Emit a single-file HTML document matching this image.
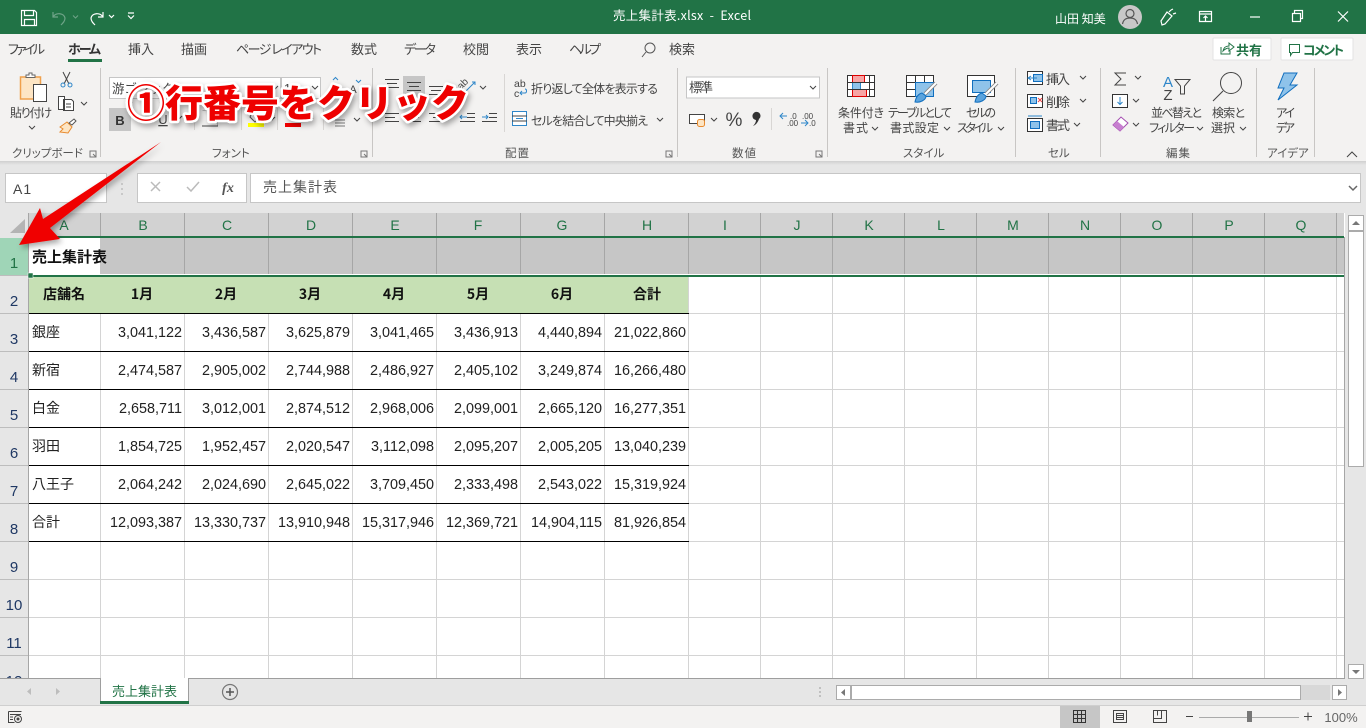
<!DOCTYPE html>
<html lang="ja"><head><meta charset="utf-8"><title>売上集計表.xlsx - Excel</title>
<style>
html,body{margin:0;padding:0;width:1366px;height:728px;overflow:hidden;background:#fff}
svg{display:block;position:absolute;left:0;top:0}
text{font-family:"Liberation Sans","Noto Sans CJK JP",sans-serif;fill:#444}
.j{font-family:"Noto Sans CJK JP","Liberation Sans",sans-serif}
.t{font-size:12px;fill:#444;font-family:"Noto Sans CJK JP",sans-serif;text-anchor:middle;font-feature-settings:"palt"}
.a{font-size:13px;fill:#444;font-family:"Noto Sans CJK JP",sans-serif;font-feature-settings:"palt"}
.s{font-size:11.500px;fill:#555;font-family:"Noto Sans CJK JP",sans-serif;font-feature-settings:"palt"}
.w{fill:#fff;font-family:"Noto Sans CJK JP",sans-serif;font-size:12.500px;white-space:pre}
.n{font-size:14.400px;fill:#222;text-anchor:end;font-family:"Liberation Sans",sans-serif}
.c{font-size:14px;fill:#222;font-family:"Noto Sans CJK JP",sans-serif}
.b{font-size:14px;fill:#111;font-weight:700;font-family:"Noto Sans CJK JP",sans-serif;text-anchor:middle}
.h{font-size:14px;fill:#217346;text-anchor:middle;font-family:"Liberation Sans",sans-serif}
.r{font-size:15px;fill:#1f3864;text-anchor:middle;font-family:"Liberation Sans",sans-serif}
.l{stroke:#444;stroke-width:1;fill:none}
.lw{stroke:#fff;stroke-width:1.2;fill:none}
.g{stroke:#d4d4d4;stroke-width:1}
.k{stroke:#000;stroke-width:1}
</style></head><body>
<svg width="1366" height="728" viewBox="0 0 1366 728">
<defs>
<filter id="sh" x="-10%" y="-40%" width="120%" height="200%"><feDropShadow dx="2" dy="3" stdDeviation="3" flood-color="#000" flood-opacity=".35"/></filter>
<linearGradient id="rs" x1="0" y1="0" x2="0" y2="1"><stop offset="0" stop-color="#cfcfcf"/><stop offset="1" stop-color="#e6e6e6"/></linearGradient>
<path id="ch" d="M0 0l3 3 3-3" fill="none" stroke="#444" stroke-width="1"/>
</defs>
<!-- title bar -->
<rect width="1366" height="34" fill="#217346"/>
<path d="M21.500 10.500h13l2 2v13h-15zM24.500 10.500v5h9v-5M24.500 25.500v-6h10v6" class="lw"/>
<path d="M53 12v5h5M53 17c3-5 11-4 12 1 0 3-2 5-4 7" stroke="#6fa388" stroke-width="1.200" fill="none"/>
<path d="M73 15.500l2.500 2.500 2.500-2.500" stroke="#6fa388" fill="none"/>
<path d="M103 12v5h-5M103 17c-3-5-11-4-12 1 0 3 2 5 4 7" class="lw"/>
<path d="M109 15l2.500 2.500 2.500-2.500" class="lw"/>
<path d="M128 13h6M128 15.500l3 3 3-3" class="lw"/>
<text x="613" y="20" class="w" textLength="138" lengthAdjust="spacing" xml:space="preserve">売上集計表.xlsx  -  Excel</text>
<text x="1055" y="23" class="w" style="font-size:12px">山田 知美</text>
<circle cx="1130" cy="17" r="12" fill="#c8c8c8"/>
<circle cx="1130" cy="13.500" r="4" fill="none" stroke="#555" stroke-width="1.200"/>
<path d="M1122.500 24c1-5 4-6 7.500-6s6.500 1 7.500 6" fill="none" stroke="#555" stroke-width="1.200"/>
<path d="M1161 21l6-9 5 4-7 8-3 1zM1169 12l2-2M1173 14l3-1M1171 10l2-1" class="lw"/>
<path d="M1199.500 11.500h12v10h-12zM1199.500 14h12M1205.500 21v-5M1203.500 18l2-2 2 2" class="lw"/>
<path d="M1250 17h10" class="lw"/>
<path d="M1292.500 13.500h8v8h-8zM1294.500 13v-2.500h8v8h-2" class="lw"/>
<path d="M1338 11.500l10 10M1348 11.500l-10 10" class="lw"/>
<!-- ribbon -->
<rect y="34" width="1366" height="127" fill="#f3f2f1"/>
<rect y="161" width="1366" height="52" fill="#e6e6e6"/>
<rect y="161" width="1366" height="4" fill="url(#rs)"/>
<text x="8" y="54" class="a" textLength="37">ファイル</text>
<text x="68" y="54" class="a" textLength="33" style="font-weight:700;fill:#333">ホーム</text>
<text x="128" y="54" class="a" textLength="26">挿入</text>
<text x="181" y="54" class="a" textLength="26">描画</text>
<text x="236" y="54" class="a" textLength="86">ページ レイアウト</text>
<text x="351" y="54" class="a" textLength="26">数式</text>
<text x="404" y="54" class="a" textLength="32">データ</text>
<text x="463" y="54" class="a" textLength="26">校閲</text>
<text x="516" y="54" class="a" textLength="26">表示</text>
<text x="569" y="54" class="a" textLength="32">ヘルプ</text>
<text x="669" y="54" class="a" textLength="26">検索</text>
<rect x="68" y="59" width="34" height="3" fill="#217346"/>
<circle cx="650" cy="48" r="5" fill="none" stroke="#555" stroke-width="1"/><path d="M646 52l-4 5" stroke="#555"/>
<!-- share/comment -->
<rect x="1213" y="38" width="58" height="22" rx="1" fill="#fff" stroke="#e3e3e3"/>
<path d="M1221 47v7h9v-3M1223 51c1-4 3-5 6-5v-3l5 4-5 4v-3c-2 0-4 1-6 3z" fill="none" stroke="#217346"/>
<text x="1236" y="55" class="a" textLength="26" style="font-weight:700;fill:#217346">共有</text>
<rect x="1281" y="38" width="72" height="22" rx="1" fill="#fff" stroke="#e3e3e3"/>
<path d="M1289.500 44.500h10v8h-7l-2 3v-3h-1z" fill="none" stroke="#217346"/>
<text x="1303" y="55" class="a" textLength="41" style="font-weight:700;fill:#217346">コメント</text>
<!-- ribbon separators -->
<g stroke="#c8c6c4"><path d="M100.500 68v89M372.500 68v89M677.500 68v89M827.500 68v89M1015.500 68v89M1100.500 68v89M1256.500 68v89M1314.500 68v89"/></g>
<g stroke="#d8d6d4"><path d="M504.500 74v58"/></g>
<!-- group labels -->
<text x="12" y="157" class="s">クリップボード</text>
<text x="212" y="157" class="s">フォント</text>
<text x="505" y="157" class="s" textLength="24">配置</text>
<text x="732" y="157" class="s" textLength="24">数値</text>
<text x="903" y="157" class="s">スタイル</text>
<text x="1048" y="157" class="s">セル</text>
<text x="1166" y="157" class="s" textLength="24">編集</text>
<text x="1267" y="157" class="s">アイデア</text>
<g fill="none" stroke="#777"><path d="M90 151h6v6h-6zM93 154l3 3"/><path d="M361 151h6v6h-6zM364 154l3 3"/><path d="M666 151h6v6h-6zM669 154l3 3"/><path d="M816 151h6v6h-6zM819 154l3 3"/></g>
<path d="M1347 157l5-5 5 5" fill="none" stroke="#444"/>
<!-- clipboard -->
<rect x="20.500" y="77" width="20" height="22" fill="#fde5c4" stroke="#f0a04b" stroke-width="1.500"/>
<path d="M26 77v-2h3v-2h3v2h3v2.500h-9z" fill="#fff" stroke="#666"/>
<rect x="33.500" y="84.500" width="13" height="17" fill="#fff" stroke="#444"/>
<text x="10" y="117" class="t" style="text-anchor:start" textLength="42">貼り付け</text>
<use href="#ch" x="29" y="126"/>
<path d="M63 72l6 12M70 72l-6 12" stroke="#444" fill="none"/><circle cx="63" cy="85" r="2" fill="none" stroke="#2e86c9"/><circle cx="70" cy="85" r="2" fill="none" stroke="#2e86c9"/>
<path d="M58.500 96.500h6v13h-6zM63.500 99.500h8l2 2v9h-10z" fill="#fff" stroke="#444"/>
<path d="M66 104h5M66 107h5" stroke="#444"/>
<use href="#ch" x="81" y="102"/>
<path d="M60 127l7-5 5 5-4 6-8-1 3-3z" fill="#fde5c4" stroke="#e88b2f"/><path d="M69 123l5-4 2 2-4 4z" fill="#fff" stroke="#555"/>
<!-- font controls -->
<rect x="109.500" y="77.500" width="171" height="21" fill="#fff" stroke="#c6c6c6"/>
<rect x="281.500" y="77.500" width="39" height="21" fill="#fff" stroke="#c6c6c6"/>
<text x="112" y="93" class="j" style="font-size:12.500px;fill:#444">游ゴシック</text>
<text x="284" y="93" style="font-size:12.500px;fill:#444">11</text>
<use href="#ch" x="272" y="86"/><use href="#ch" x="312" y="86"/>
<text x="337" y="93" style="font-size:13px;fill:#444" text-anchor="middle">A</text><path d="M333 80l2.500-2.500 2.500 2.500" stroke="#2e86c9" fill="none"/>
<text x="353" y="93" style="font-size:11px;fill:#444" text-anchor="middle">A</text><path d="M356 80l2.500 2.500 2.500-2.500" stroke="#2e86c9" fill="none"/>
<rect x="109" y="108" width="22" height="23" fill="#c6c6c6"/>
<text x="120" y="125" style="font-size:13px;font-weight:700;fill:#333" text-anchor="middle">B</text>
<text x="163" y="124" style="font-size:13px;fill:#444" text-anchor="middle" text-decoration="underline">U</text>
<use href="#ch" x="176" y="116"/>
<path d="M194.500 108v22M277.500 108v22M241.500 108v22M323.500 108v22" stroke="#d8d6d4"/>
<path d="M202 126h16" stroke="#444"/><path d="M202.500 110.500h15v15" stroke="#bbb" fill="none"/>
<rect x="248" y="123" width="16" height="4" fill="#ffff00"/><path d="M252 113l6 6-3 3-5-5z" fill="none" stroke="#555"/>
<use href="#ch" x="269" y="117"/>
<rect x="285" y="123" width="16" height="4" fill="#f00000"/>
<use href="#ch" x="307" y="118"/>
<path d="M335 120h10M335 123h10M335 126h10" stroke="#777"/>
<use href="#ch" x="354" y="118"/>
<!-- alignment -->
<rect x="403" y="76" width="22" height="22" fill="#c6c6c6"/>
<g class="l"><path d="M385 79.500h14M387 83.500h10M385 87.500h14"/><path d="M407 82.500h14M409 86.500h10M407 90.500h14"/><path d="M429 86.500h14M431 90.500h10M429 94.500h14"/>
<path d="M385 113.500h14M385 117.500h10M385 121.500h14"/><path d="M407 113.500h14M409 117.500h10M407 121.500h14"/><path d="M429 113.500h14M433 117.500h10M429 121.500h14"/>
<path d="M467 113.500h8M467 117.500h8M460 121.500h15"/><path d="M489 113.500h8M489 117.500h8M482 121.500h15"/></g>
<path d="M467 117h-7M462 115l-2 2 2 2" stroke="#2e86c9" fill="none"/><path d="M482 117h6M486 115l2 2-2 2" stroke="#2e86c9" fill="none"/>
<text x="461" y="90" style="font-size:10px;fill:#444" transform="rotate(-45 461 90)">ab</text><path d="M466 91l9-9M472 82h3v3" stroke="#2e86c9" fill="none"/>
<use href="#ch" x="480" y="86"/>
<text x="514" y="87" style="font-size:10.500px;fill:#444">ab</text><text x="514" y="97" style="font-size:10.500px;fill:#444">c</text>
<path d="M520 93h5c2 0 2-4 0-4M522 91l-2 2 2 2" stroke="#2e86c9" fill="none"/>
<text x="531" y="93" class="t" style="text-anchor:start" textLength="127">折り返して全体を表示する</text>
<rect x="512.500" y="111.500" width="14" height="14" fill="#fff" stroke="#2e86c9"/><path d="M512 116h15M512 121h15" stroke="#444"/><path d="M516 118.500h7" stroke="#2e86c9"/>
<text x="531" y="125" class="t" style="text-anchor:start" textLength="117">セルを結合して中央揃え</text>
<use href="#ch" x="657" y="118"/>
<!-- number -->
<rect x="686.500" y="77" width="133" height="21" fill="#fff" stroke="#c6c6c6"/>
<text x="689" y="92" class="a" textLength="24">標準</text>
<use href="#ch" x="810" y="86"/>
<rect x="689.500" y="114.500" width="15" height="9" fill="#fff" stroke="#444"/><rect x="697.500" y="119.500" width="7" height="7" rx="2" fill="#fde5c4" stroke="#e88b2f"/>
<use href="#ch" x="711" y="118"/>
<text x="734" y="126" style="font-size:19px;fill:#444" text-anchor="middle">%</text>
<path d="M753 114a4 4 0 1 1 6 5c-1 3-3 6-6 7 2-2 3-4 3-6a4 4 0 0 1-3-6z" fill="#333"/>
<path d="M771.500 108v22" stroke="#d8d6d4"/>
<text x="790" y="119" style="font-size:8px;fill:#444">.0</text><text x="787" y="126" style="font-size:8px;fill:#444">.00</text><path d="M780 116h7M783 113l-3 3 3 3" stroke="#2e86c9" fill="none"/>
<text x="802" y="119" style="font-size:8px;fill:#444">.00</text><text x="809" y="126" style="font-size:8px;fill:#444">.0</text><path d="M801 123h7M805 120l3 3-3 3" stroke="#2e86c9" fill="none"/>
<!-- style icons -->
<rect x="847.500" y="75.500" width="27" height="21" fill="#fff" stroke="#333"/>
<rect x="852.500" y="75.500" width="12" height="7" fill="#f7a5a5" stroke="#d00"/><rect x="852.500" y="89.500" width="14" height="7" fill="#f7a5a5" stroke="#d00"/><rect x="852.500" y="82.500" width="8" height="7" fill="#8fc3ea" stroke="#2e86c9"/>
<path d="M847 82.500h28M847 89.500h28M869.500 75v22" stroke="#333" fill="none"/>
<rect x="906.500" y="75.500" width="27" height="21" fill="#fff" stroke="#333"/><path d="M906 82.500h28M906 89.500h28M915.500 75v22M924.500 75v22" stroke="#333"/>
<rect x="915.500" y="82.500" width="18" height="14" fill="#8fc3ea" stroke="#106ebe"/>
<path d="M936 83l-11 11" stroke="#8a8a8a" stroke-width="4"/><path d="M936 83l-11 11" stroke="#fff" stroke-width="2"/>
<path d="M915 102c1-5 3-8 7-9l4 3c0 4-6 7-11 6z" fill="#5aa3dd" stroke="#106ebe"/>
<rect x="967.500" y="75.500" width="27" height="21" fill="#fff" stroke="#333"/>
<rect x="972.500" y="80.500" width="18" height="12" fill="#8fc3ea" stroke="#106ebe"/>
<path d="M997 83l-11 11" stroke="#8a8a8a" stroke-width="4"/><path d="M997 83l-11 11" stroke="#fff" stroke-width="2"/>
<path d="M975 102c1-5 3-8 7-9l4 3c0 4-6 7-11 6z" fill="#5aa3dd" stroke="#106ebe"/>
<text x="838" y="117" class="t" style="text-anchor:start" textLength="46">条件付き</text><text x="843" y="132" class="t" style="text-anchor:start" textLength="25">書式</text><use href="#ch" x="872" y="127"/>
<text x="888" y="117" class="t" style="text-anchor:start" textLength="64">テーブルとして</text><text x="890" y="132" class="t" style="text-anchor:start" textLength="49">書式設定</text><use href="#ch" x="944" y="127"/>
<text x="966" y="117" class="t" style="text-anchor:start" textLength="30">セルの</text><text x="957" y="132" class="t" style="text-anchor:start" textLength="36">スタイル</text><use href="#ch" x="998" y="127"/>
<!-- cells -->
<g fill="none" stroke="#333">
<rect x="1027.500" y="71.500" width="15" height="13" fill="#fff"/><rect x="1033.500" y="74.500" width="9" height="7" fill="#8fc3ea" stroke="#106ebe"/><path d="M1037 78h-9M1031 76l-3 2 3 2" stroke="#2e86c9"/>
<rect x="1027.500" y="94.500" width="15" height="13" fill="#fff"/><rect x="1030.500" y="97.500" width="6" height="6" fill="#8fc3ea" stroke="#106ebe"/><path d="M1038 98l4 4M1042 98l-4 4" stroke="#e44"/>
<rect x="1027.500" y="118.500" width="15" height="13" fill="#fff"/><rect x="1030.500" y="121.500" width="9" height="7" fill="#8fc3ea" stroke="#106ebe"/><path d="M1028 116h14" stroke="#2e86c9"/>
</g>
<text x="1046" y="84" class="a" textLength="24">挿入</text><use href="#ch" x="1080" y="76"/>
<text x="1046" y="107" class="a" textLength="24">削除</text><use href="#ch" x="1080" y="99"/>
<text x="1046" y="130" class="a" textLength="24">書式</text><use href="#ch" x="1074" y="123"/>
<!-- edit -->
<path d="M1126 73h-11l6 6-6 6h11" fill="none" stroke="#444"/><use href="#ch" x="1135" y="76"/>
<rect x="1112.500" y="94.500" width="15" height="13" fill="#fff" stroke="#333"/><path d="M1120 97v7M1117.500 102l2.500 2.500 2.500-2.500" stroke="#2e86c9" fill="none"/><use href="#ch" x="1133" y="99"/>
<path d="M1113 125l8-8 7 6-8 8z" fill="#fff" stroke="#a34bb0"/><path d="M1113 125l4-4 7 6-4 4z" fill="#c77fd0"/><use href="#ch" x="1133" y="123"/>
<text x="1168" y="87" style="font-size:15px;fill:#2e86c9" text-anchor="middle">A</text><text x="1168" y="100" style="font-size:15px;fill:#444" text-anchor="middle">Z</text>
<path d="M1175 79.500h15l-5.500 6.500v8h-4v-8z" fill="none" stroke="#444"/>
<text x="1151" y="117" class="t" style="text-anchor:start" textLength="51">並べ替えと</text><text x="1149" y="132" class="t" style="text-anchor:start" textLength="46">フィルター</text><use href="#ch" x="1197" y="127"/>
<circle cx="1231" cy="83" r="10.500" fill="none" stroke="#444"/><path d="M1223 91l-10 10" stroke="#444" stroke-width="1.100"/>
<text x="1212" y="117" class="t" style="text-anchor:start" textLength="33">検索と</text><text x="1211" y="132" class="t" style="text-anchor:start">選択</text><use href="#ch" x="1240" y="127"/>
<path d="M1284 73h13l-7 12h7l-19 15 6-12h-6z" fill="#8fc3ea" stroke="#106ebe"/>
<text x="1276" y="117" class="t" style="text-anchor:start" textLength="19">アイ</text><text x="1276" y="132" class="t" style="text-anchor:start" textLength="19">デア</text>
<!-- formula bar -->
<rect x="5.500" y="173.500" width="101" height="29" fill="#fff" stroke="#c6c6c6"/>
<text x="13" y="194" style="font-size:14px;fill:#444;letter-spacing:1px">A1</text>
<path d="M122 183v2M122 188v2M122 193v2" stroke="#aaa"/>
<rect x="137.500" y="173.500" width="109" height="29" fill="#fff" stroke="#c6c6c6"/>
<rect x="250.500" y="173.500" width="1110" height="29" fill="#fff" stroke="#c6c6c6"/>
<path d="M151 182l9 9M160 182l-9 9" stroke="#bbb" stroke-width="1.500" fill="none"/>
<path d="M187 187l4 4 8-9" stroke="#bbb" stroke-width="1.500" fill="none"/>
<text x="228" y="192" style="font-size:14px;font-style:italic;font-family:'Liberation Serif',serif;font-weight:700;fill:#555" text-anchor="middle">fx</text>
<text x="263" y="192" class="j" style="font-size:14px;fill:#555;letter-spacing:1px">売上集計表</text>
<path d="M1349 186l4 4 4-4" fill="none" stroke="#666" stroke-width="1.500"/>
<!-- sheet -->
<rect x="0" y="213" width="1345" height="466" fill="#fff"/>
<rect x="0" y="213" width="1344" height="24" fill="#d2d2d2"/>
<rect x="0" y="213" width="29" height="24" fill="#e6e6e6"/>
<path d="M25 219v14h-15z" fill="#b4b4b4"/>
<rect x="0" y="237" width="28" height="441" fill="#e6e6e6"/>
<rect x="0" y="238" width="28" height="38" fill="#9fd5b7"/>
<rect x="100" y="238" width="1244" height="36" fill="#c6c6c6"/>
<rect x="29" y="277" width="660" height="36" fill="#c6e0b4"/>
<!-- gridlines -->
<g class="g">
<path d="M29 351.500H1344M29 313.500H1344M29 389.500H1344M29 427.500H1344M29 465.500H1344M29 503.500H1344M29 541.500H1344M29 579.500H1344M29 617.500H1344M29 655.500H1344"/>
<path d="M100.500 314V678M184.500 314V678M268.500 314V678M352.500 314V678M436.500 314V678M520.500 314V678M604.500 314V678M688.500 277V678M760.500 277V678M832.500 277V678M904.500 277V678M976.500 277V678M1048.500 277V678M1120.500 277V678M1192.500 277V678M1264.500 277V678M1336.500 277V678"/>
</g>
<g stroke="#a6a6a6"><path d="M100.500 213v24M184.500 213v24M268.500 213v24M352.500 213v24M436.500 213v24M520.500 213v24M604.500 213v24M688.500 213v24M760.500 213v24M832.500 213v24M904.500 213v24M976.500 213v24M1048.500 213v24M1120.500 213v24M1192.500 213v24M1264.500 213v24M1336.500 213v24"/>
<path d="M184.500 238v36M268.500 238v36M352.500 238v36M436.500 238v36M520.500 238v36M604.500 238v36M688.500 238v36M760.500 238v36M832.500 238v36M904.500 238v36M976.500 238v36M1048.500 238v36M1120.500 238v36M1192.500 238v36M1264.500 238v36M1336.500 238v36"/>
<path d="M28.500 213V678"/><path d="M1344.500 237V678"/><path d="M0 678.500H1344"/>
<path d="M0 313.500h28M0 351.500h28M0 389.500h28M0 427.500h28M0 465.500h28M0 503.500h28M0 541.500h28M0 579.500h28M0 617.500h28M0 655.500h28M0 275.500h28" stroke="#bdbdbd"/>
</g>
<g class="k"><path d="M29 313.500H689M29 351.500H689M29 389.500H689M29 427.500H689M29 465.500H689M29 503.500H689M29 541.500H689"/></g>
<rect x="29" y="236" width="1315" height="2" fill="#217346"/>
<rect x="29" y="274" width="1315" height="1" fill="#fff"/>
<rect x="29" y="275" width="1315" height="2" fill="#217346"/>
<rect x="28" y="273" width="5" height="5" fill="#217346" stroke="#fff" stroke-width=".5"/>
<!-- col headers -->
<text x="64" y="230" class="h">A</text><text x="143" y="230" class="h">B</text><text x="227" y="230" class="h">C</text><text x="311" y="230" class="h">D</text><text x="395" y="230" class="h">E</text><text x="478" y="230" class="h">F</text><text x="562" y="230" class="h">G</text><text x="647" y="230" class="h">H</text><text x="725" y="230" class="h">I</text><text x="797" y="230" class="h">J</text><text x="869" y="230" class="h">K</text><text x="941" y="230" class="h">L</text><text x="1013" y="230" class="h">M</text><text x="1085" y="230" class="h">N</text><text x="1157" y="230" class="h">O</text><text x="1229" y="230" class="h">P</text><text x="1301" y="230" class="h">Q</text>
<!-- row headers -->
<text x="14" y="268" class="r" style="fill:#217346">1</text><text x="14" y="306" class="r">2</text><text x="14" y="344" class="r">3</text><text x="14" y="382" class="r">4</text><text x="14" y="420" class="r">5</text><text x="14" y="458" class="r">6</text><text x="14" y="496" class="r">7</text><text x="14" y="534" class="r">8</text><text x="14" y="572" class="r">9</text><text x="14" y="610" class="r">10</text><text x="14" y="648" class="r">11</text><text x="14" y="686" class="r">12</text>
<!-- data -->
<text x="32" y="262" class="b" style="text-anchor:start;font-size:15px">売上集計表</text>
<text x="64" y="299" class="b">店舗名</text><text x="142" y="299" class="b">1月</text><text x="226" y="299" class="b">2月</text><text x="310" y="299" class="b">3月</text><text x="394" y="299" class="b">4月</text><text x="478" y="299" class="b">5月</text><text x="562" y="299" class="b">6月</text><text x="647" y="299" class="b">合計</text>
<text x="32" y="337" class="c">銀座</text><text x="182" y="337" class="n">3,041,122</text><text x="266" y="337" class="n">3,436,587</text><text x="350" y="337" class="n">3,625,879</text><text x="434" y="337" class="n">3,041,465</text><text x="518" y="337" class="n">3,436,913</text><text x="602" y="337" class="n">4,440,894</text><text x="686" y="337" class="n">21,022,860</text>
<text x="32" y="375" class="c">新宿</text><text x="182" y="375" class="n">2,474,587</text><text x="266" y="375" class="n">2,905,002</text><text x="350" y="375" class="n">2,744,988</text><text x="434" y="375" class="n">2,486,927</text><text x="518" y="375" class="n">2,405,102</text><text x="602" y="375" class="n">3,249,874</text><text x="686" y="375" class="n">16,266,480</text>
<text x="32" y="413" class="c">白金</text><text x="182" y="413" class="n">2,658,711</text><text x="266" y="413" class="n">3,012,001</text><text x="350" y="413" class="n">2,874,512</text><text x="434" y="413" class="n">2,968,006</text><text x="518" y="413" class="n">2,099,001</text><text x="602" y="413" class="n">2,665,120</text><text x="686" y="413" class="n">16,277,351</text>
<text x="32" y="451" class="c">羽田</text><text x="182" y="451" class="n">1,854,725</text><text x="266" y="451" class="n">1,952,457</text><text x="350" y="451" class="n">2,020,547</text><text x="434" y="451" class="n">3,112,098</text><text x="518" y="451" class="n">2,095,207</text><text x="602" y="451" class="n">2,005,205</text><text x="686" y="451" class="n">13,040,239</text>
<text x="32" y="489" class="c">八王子</text><text x="182" y="489" class="n">2,064,242</text><text x="266" y="489" class="n">2,024,690</text><text x="350" y="489" class="n">2,645,022</text><text x="434" y="489" class="n">3,709,450</text><text x="518" y="489" class="n">2,333,498</text><text x="602" y="489" class="n">2,543,022</text><text x="686" y="489" class="n">15,319,924</text>
<text x="32" y="527" class="c">合計</text><text x="182" y="527" class="n">12,093,387</text><text x="266" y="527" class="n">13,330,737</text><text x="350" y="527" class="n">13,910,948</text><text x="434" y="527" class="n">15,317,946</text><text x="518" y="527" class="n">12,369,721</text><text x="602" y="527" class="n">14,904,115</text><text x="686" y="527" class="n">81,926,854</text>
<!-- scrollbar -->
<rect x="1345" y="213" width="21" height="493" fill="#e6e6e6"/>
<rect x="1348.500" y="215.500" width="15" height="15" fill="#fff" stroke="#ababab"/><path d="M1352 225l4-4 4 4z" fill="#777"/>
<rect x="1348.500" y="231.500" width="15" height="235" fill="#fff" stroke="#ababab"/>
<rect x="1348.500" y="664.500" width="15" height="14" fill="#fff" stroke="#ababab"/><path d="M1352 670l4 4 4-4z" fill="#777"/>
<!-- sheet tabs -->
<rect x="0" y="679" width="1366" height="26" fill="#e6e6e6"/>
<path d="M0 678.500H1345" stroke="#9e9e9e"/>
<rect x="100" y="678" width="89" height="26" fill="#fff"/>
<path d="M100.500 678v25M188.500 678v25" stroke="#9e9e9e"/>
<rect x="100" y="701" width="89" height="3" fill="#217346"/>
<text x="112" y="696" class="j" style="font-size:13px;fill:#217346">売上集計表</text>
<path d="M31 688l-4 3.500 4 3.500zM56 688l4 3.500-4 3.500z" fill="#bdbdbd"/>
<circle cx="230" cy="692" r="7.500" fill="none" stroke="#777" stroke-width="1.200"/><path d="M230 688v8M226 692h8" stroke="#555" stroke-width="1.500"/>
<path d="M820 687v2M820 691v2M820 695v2" stroke="#999"/>
<rect x="836.500" y="685.500" width="14" height="14" fill="#fff" stroke="#ababab"/><path d="M845 689l-4 3.500 4 3.500z" fill="#777"/>
<rect x="851.500" y="685.500" width="449" height="14" fill="#fff" stroke="#ababab"/>
<rect x="1301" y="685" width="29" height="15" fill="#d8d8d8"/>
<rect x="1332.500" y="685.500" width="14" height="14" fill="#fff" stroke="#ababab"/><path d="M1338 689l4 3.500-4 3.500z" fill="#777"/>
<!-- status bar -->
<rect x="0" y="705" width="1366" height="23" fill="#f3f2f1"/>
<path d="M0 705.500H1366" stroke="#cfcfcf"/>
<path d="M8.500 711.500h13M8.500 711.500v11h6M10 714.500h11M10 717h3M10 719.500h3" stroke="#444" fill="none"/><circle cx="18" cy="719" r="3.500" fill="none" stroke="#444"/><circle cx="18" cy="719" r="1.500" fill="#444"/>
<rect x="1060" y="706" width="40" height="22" fill="#c6c6c6"/>
<path d="M1073.500 710.500h12v12h-12zM1073.500 714.500h12M1073.500 718.500h12M1077.500 710.500v12M1081.500 710.500v12" fill="none" stroke="#333"/>
<path d="M1113.500 710.500h13v12h-13zM1116.500 713.500h7v6h-7zM1117 715.500h6M1117 717.500h6" fill="none" stroke="#444"/>
<path d="M1153.500 710.500h13v12h-13zM1153.500 718.500h8v-8M1157.500 710.500v5" fill="none" stroke="#444"/>
<path d="M1186 716.500h7" stroke="#444"/>
<path d="M1199 717.500h100" stroke="#aaa"/>
<rect x="1247" y="711" width="5" height="11" fill="#777"/>
<path d="M1304 716.500h8M1308 712.500v8" stroke="#444"/>
<text x="1341" y="722" style="font-size:13px;fill:#666;text-anchor:middle">100%</text>
<!-- annotation -->
<g filter="url(#sh)">
<path d="M161 142L43 219L40 208L19 245L60 239L50 228Z" fill="#f00000"/>
</g>
<g filter="url(#sh)">
<text x="127" y="117" class="j" style="font-size:38px;font-weight:900;fill:#ee0000;stroke:#fff;stroke-width:5px;paint-order:stroke;stroke-linejoin:round">①行番号をクリック</text>
</g>
</svg>
</body></html>
